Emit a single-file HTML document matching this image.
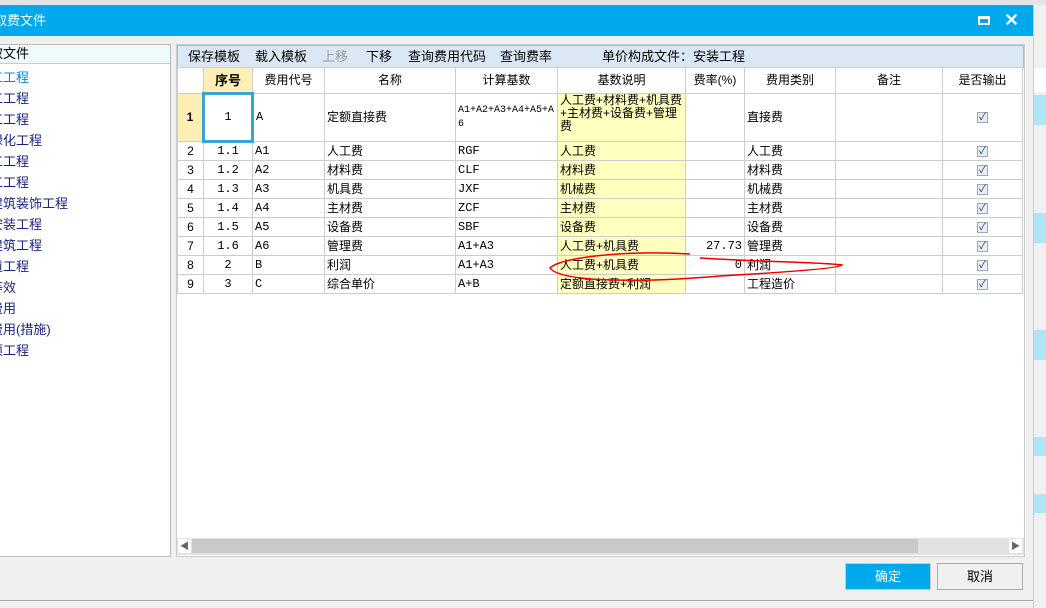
<!DOCTYPE html>
<html><head><meta charset="utf-8"><style>
*{margin:0;padding:0;box-sizing:border-box}
body{width:1046px;height:608px;overflow:hidden;background:#f0f0f0;font-family:"Liberation Sans","Noto Sans CJK SC",sans-serif;font-size:12px;color:#000;position:relative}
.abs{position:absolute}
.title{left:0;top:5px;width:1033px;height:31px;background:#00a8ec;color:#fff;font-size:13px;line-height:31px}
.left{left:0;top:44px;width:171px;height:513px;border:1px solid #bbb;border-left:none;background:#fff;overflow:hidden}
.lh{height:18px;background:#eefafd;font-size:13px;line-height:17px;padding-left:0}
.li{height:21px;line-height:21px;font-size:13px;color:#1a237e;white-space:nowrap;margin-left:-10px}
.right{left:176px;top:44px;width:849px;height:513px;border:1px solid #ccc;background:#fff;overflow:hidden}
.tb{height:23px;background:#dce7f5;border:1px solid #a9bbd4;font-size:13px;line-height:21px;position:relative}
.tb span{position:absolute;top:0}
table{border-collapse:collapse;table-layout:fixed;position:absolute;left:0;top:22px}
td{border:1px solid #ccc;height:19px;font-size:12px;padding:0 2px;white-space:nowrap;overflow:hidden;line-height:17px}
.m{font-family:"Liberation Mono","Noto Sans CJK SC",monospace;font-size:12px}
.c{text-align:center}.r{text-align:right}
.y{background:#ffffc0}
.hd td{height:26px;text-align:center;font-size:12px}
.cb{display:inline-block;width:11px;height:11px;border:1px solid #9ab;background:#e8eef6;font-size:10px;line-height:9px;color:#335;text-align:center;vertical-align:middle}
.btn{top:563px;height:27px;width:86px;text-align:center;line-height:25px;font-size:13px;border:1px solid #aaa}
</style></head><body>
<div class="abs" style="left:0;top:0;width:1046px;height:5px;background:#e4e4e4"></div>
<div class="abs" style="left:1033px;top:5px;width:13px;height:603px;background:#f0f0f0;border-left:1px solid #ccc"></div>
<div class="abs" style="left:1034px;top:68px;width:12px;height:24px;background:#fff"></div>
<div class="abs" style="left:1034px;top:95px;width:12px;height:30px;background:#aee6f8"></div>
<div class="abs" style="left:1034px;top:213px;width:12px;height:30px;background:#aee6f8"></div>
<div class="abs" style="left:1034px;top:330px;width:12px;height:30px;background:#aee6f8"></div>
<div class="abs" style="left:1034px;top:437px;width:12px;height:19px;background:#aee6f8"></div>
<div class="abs" style="left:1034px;top:494px;width:12px;height:19px;background:#aee6f8"></div>
<div class="abs title"><span style="margin-left:-6px">取费文件</span>
<span class="abs" style="left:978px;top:11px;width:12px;height:9px;border:2px solid #fff;border-top-width:3px"></span>
<span class="abs" style="left:1004px;top:0;font-size:18px;font-weight:bold">✕</span></div>
<div class="abs" style="left:0;top:600px;width:1033px;height:1px;background:#aaa"></div>
<div class="abs left">
<div class="lh"><span style="margin-left:-10px">取文件</span></div>
<div style="border-top:1px solid #ccc;padding-top:3px">
<div class="li" style="color:#0a84d0">工工程</div>
<div class="li">工工程</div>
<div class="li">工工程</div>
<div class="li">绿化工程</div>
<div class="li">工工程</div>
<div class="li">工工程</div>
<div class="li">建筑装饰工程</div>
<div class="li">安装工程</div>
<div class="li">建筑工程</div>
<div class="li">道工程</div>
<div class="li">等效</div>
<div class="li">费用</div>
<div class="li">费用(措施)</div>
<div class="li">项工程</div>
</div></div>
<div class="abs right">
<div class="tb">
<span style="left:10px">保存模板</span><span style="left:77px">载入模板</span><span style="left:144px;color:#999">上移</span><span style="left:188px">下移</span><span style="left:230px">查询费用代码</span><span style="left:322px">查询费率</span><span style="left:424px">单价构成文件：安装工程</span>
</div>
<table>
<colgroup><col style="width:26px"><col style="width:49px"><col style="width:72px"><col style="width:131px"><col style="width:102px"><col style="width:128px"><col style="width:59px"><col style="width:91px"><col style="width:107px"><col style="width:80px"></colgroup>
<tr class="hd"><td></td><td style="background:#ffeeb5;font-weight:bold;font-size:13px">序号</td><td>费用代号</td><td>名称</td><td>计算基数</td><td>基数说明</td><td>费率(%)</td><td>费用类别</td><td>备注</td><td>是否输出</td></tr>
<tr style="height:48px"><td class="c" style="background:#ffeeb5;font-weight:bold">1</td><td class="c m" style="border:3px solid #3ba3d6">1</td><td class="m">A</td><td>定额直接费</td><td class="m" style="white-space:normal;line-height:14px;font-size:10px">A1+A2+A3+A4+A5+A<br>6</td><td class="y" style="white-space:normal;line-height:13px;vertical-align:top">人工费+材料费+机具费+主材费+设备费+管理费</td><td></td><td>直接费</td><td></td><td class="c"><span class="cb">✓</span></td></tr>
<tr><td class="c">2</td><td class="c m">1.1</td><td class="m">A1</td><td>人工费</td><td class="m">RGF</td><td class="y">人工费</td><td></td><td>人工费</td><td></td><td class="c"><span class="cb">✓</span></td></tr>
<tr><td class="c">3</td><td class="c m">1.2</td><td class="m">A2</td><td>材料费</td><td class="m">CLF</td><td class="y">材料费</td><td></td><td>材料费</td><td></td><td class="c"><span class="cb">✓</span></td></tr>
<tr><td class="c">4</td><td class="c m">1.3</td><td class="m">A3</td><td>机具费</td><td class="m">JXF</td><td class="y">机械费</td><td></td><td>机械费</td><td></td><td class="c"><span class="cb">✓</span></td></tr>
<tr><td class="c">5</td><td class="c m">1.4</td><td class="m">A4</td><td>主材费</td><td class="m">ZCF</td><td class="y">主材费</td><td></td><td>主材费</td><td></td><td class="c"><span class="cb">✓</span></td></tr>
<tr><td class="c">6</td><td class="c m">1.5</td><td class="m">A5</td><td>设备费</td><td class="m">SBF</td><td class="y">设备费</td><td></td><td>设备费</td><td></td><td class="c"><span class="cb">✓</span></td></tr>
<tr><td class="c">7</td><td class="c m">1.6</td><td class="m">A6</td><td>管理费</td><td class="m">A1+A3</td><td class="y">人工费+机具费</td><td class="r m">27.73</td><td>管理费</td><td></td><td class="c"><span class="cb">✓</span></td></tr>
<tr><td class="c">8</td><td class="c m">2</td><td class="m">B</td><td>利润</td><td class="m">A1+A3</td><td class="y">人工费+机具费</td><td class="r m">0</td><td>利润</td><td></td><td class="c"><span class="cb">✓</span></td></tr>
<tr><td class="c">9</td><td class="c m">3</td><td class="m">C</td><td>综合单价</td><td class="m">A+B</td><td class="y">定额直接费+利润</td><td></td><td>工程造价</td><td></td><td class="c"><span class="cb">✓</span></td></tr>
</table>
<div class="abs" style="left:0;top:493px;width:847px;height:17px;background:#e2e2e2">
<div class="abs" style="left:1px;top:1px;width:13px;height:14px;background:#fff;font-size:9px;color:#666;text-align:center;line-height:14px">◀</div>
<div class="abs" style="left:15px;top:1px;width:726px;height:14px;background:#c9c9c9"></div>
<div class="abs" style="right:2px;top:1px;width:13px;height:14px;background:#fff;font-size:9px;color:#666;text-align:center;line-height:14px">▶</div>
</div>
</div>
<svg class="abs" style="left:0;top:0" width="1046" height="608"><path d="M690 254 C620 250,560 258,550 268 C560 282,640 283,720 276 C790 272,840 268,842 265 C820 262,760 262,700 258" fill="none" stroke="#e00" stroke-width="1.5"/></svg>
<div class="abs btn" style="left:845px;background:#00a8ec;color:#fff;border-color:#ccc">确定</div>
<div class="abs btn" style="left:937px;background:#f0f0f0">取消</div>
</body></html>
